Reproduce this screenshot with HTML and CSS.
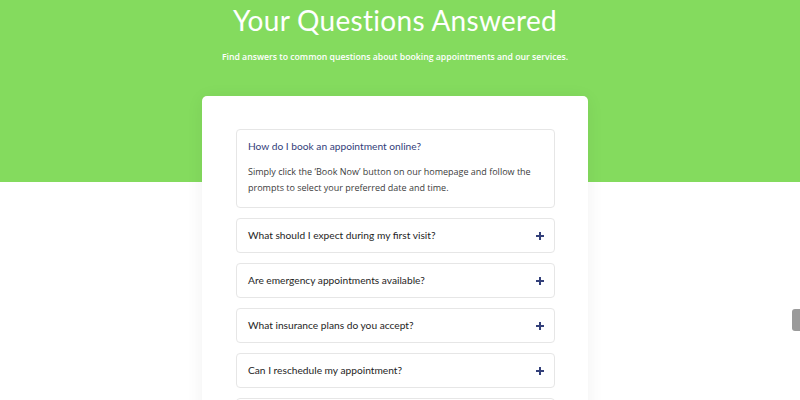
FILE: index.html
```html
<!DOCTYPE html>
<html>
<head>
<meta charset="utf-8">
<link rel="stylesheet" href="styles.css">
</head>
<body>
<section class="hero">
  <h1 class="title">Your Questions Answered</h1>
  <p class="subtitle">Find answers to common questions about booking appointments and our services.</p>
</section>
<main class="card">
  <div class="item open">
    <div class="q q-open">How do I book an appointment online?</div>
    <div class="a">Simply click the ‘Book Now’ button on our homepage and follow the prompts to select your preferred date and time.</div>
  </div>
  <div class="item">
    <div class="q"><span>What should I expect during my first visit?</span><span class="plus"></span></div>
  </div>
  <div class="item">
    <div class="q"><span>Are emergency appointments available?</span><span class="plus"></span></div>
  </div>
  <div class="item">
    <div class="q"><span>What insurance plans do you accept?</span><span class="plus"></span></div>
  </div>
  <div class="item">
    <div class="q"><span>Can I reschedule my appointment?</span><span class="plus"></span></div>
  </div>
  <div class="item">
    <div class="q"><span>Do you offer telehealth consultations?</span><span class="plus"></span></div>
  </div>
</main>
<div class="scroll-thumb"></div>
</body>
</html>
```
FILE: styles.css
```css
html, body {
  margin: 0;
  padding: 0;
  background: #ffffff;
  overflow: hidden;
}
body {
  font-family: "Open Sans", sans-serif;
  height: 400px;
}
.hero {
  background: #84db5e;
  height: 182px;
  text-align: center;
  color: #ffffff;
  padding: 1px 10px 0 0;
  box-sizing: border-box;
}
.title {
  font-family: Lato, sans-serif;
  font-weight: 400;
  font-size: 28px;
  line-height: 36px;
  margin: 1px 0 0 0;
  letter-spacing: 0.3px;
}
.subtitle {
  font-size: 8.7px;
  font-weight: 600;
  line-height: 16px;
  margin: 11px 0 0 0;
}
.card {
  width: 386px;
  box-sizing: border-box;
  margin: -86px 0 0 calc(50% - 198px);
  background: #ffffff;
  border-radius: 5px;
  box-shadow: 0 2px 18px rgba(0,0,0,0.06);
  padding: 33px 33px 40px 34px;
  display: flex;
  flex-direction: column;
  gap: 10px;
}
.item {
  border: 1px solid #e6e6e6;
  border-radius: 4px;
  background: #fff;
}
.q {
  font-family: Lato, sans-serif;
  font-size: 10.2px;
  line-height: 17px;
  color: #1e1e1e;
  padding: 8px 11px 8px 11px;
  display: flex;
  justify-content: space-between;
  align-items: center;
}
.q-open {
  color: #33407a;
}
.a {
  font-size: 9px;
  line-height: 16px;
  color: #3c3c3c;
  padding: 0 11px 11px 11px;
  margin-top: 1px;
}
.plus {
  width: 8px;
  height: 8px;
  position: relative;
  margin-right: -1px;
}
.plus::before, .plus::after {
  content: "";
  position: absolute;
  background: #33407a;
}
.plus::before {
  left: 0; right: 0; top: 3px; height: 2px;
}
.plus::after {
  top: 0; bottom: 0; left: 3px; width: 2px;
}
.scroll-thumb {
  position: fixed;
  right: 0;
  top: 309px;
  width: 8px;
  height: 22px;
  background: #9a9a9a;
  border-radius: 3px 0 0 3px;
}
```
